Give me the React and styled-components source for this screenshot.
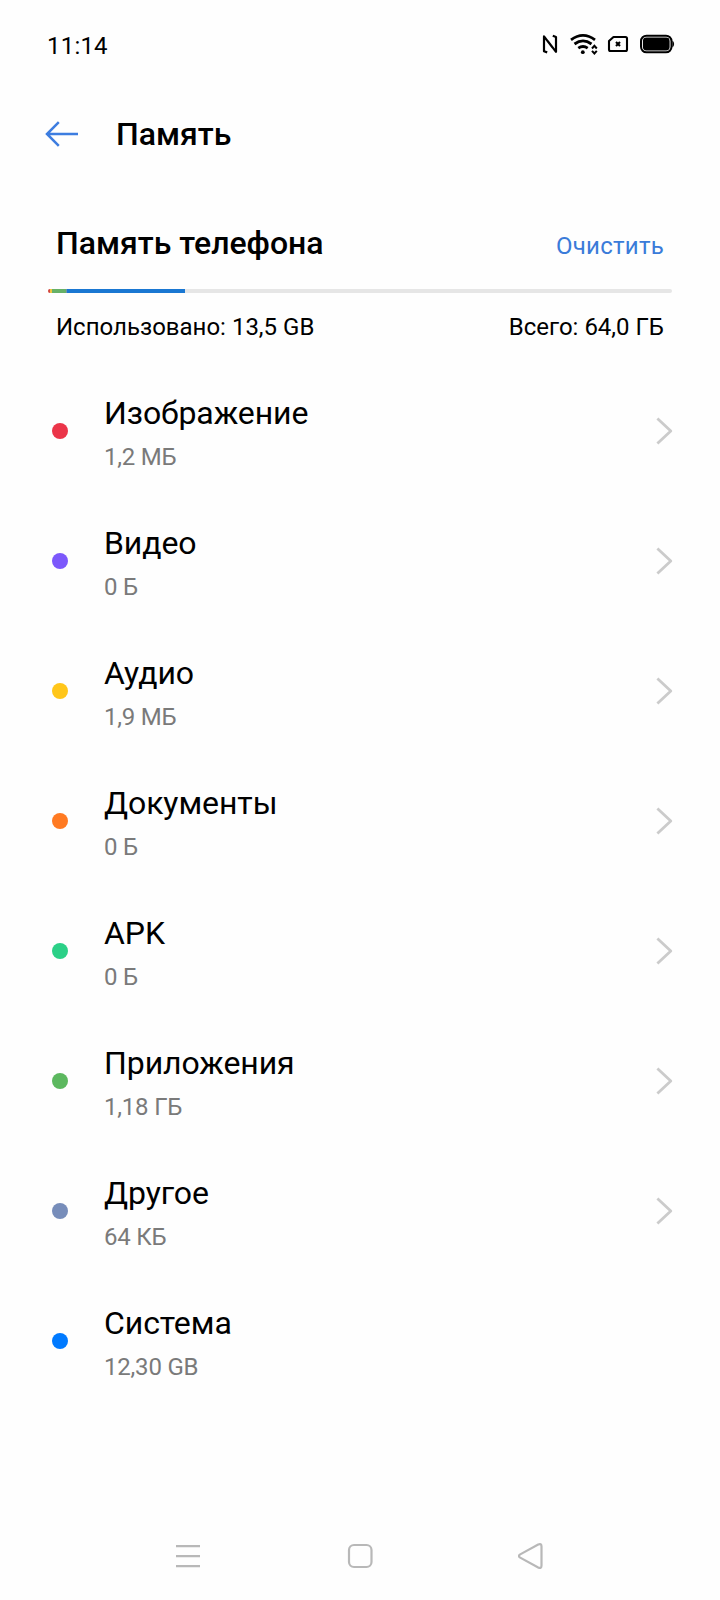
import React from "react";
import styled, { createGlobalStyle } from "styled-components";

const GlobalStyle = createGlobalStyle`
  * { box-sizing: border-box; }
  body { margin: 0; background: #fefefe; }
`;

const Screen = styled.main`
  width: 720px;
  height: 1600px;
  display: flex;
  flex-direction: column;
  overflow: hidden;
  background: #fefefe;
  color: #000;
  font-family: Roboto, "Noto Sans", sans-serif;
`;

const StatusBar = styled.div`
  height: 90px;
  padding: 32px 45px 0 47px;
  display: flex;
  justify-content: space-between;
  align-items: flex-start;
`;

const Clock = styled.span`
  font-size: 24px;
  line-height: 28px;
  letter-spacing: 0.2px;
`;

const StatusIcons = styled.svg`
  width: 134px;
  height: 24px;
  display: block;
`;

const Header = styled.header`
  height: 89px;
  padding: 25px 46px 0 45px;
  display: flex;
  align-items: flex-start;
`;

const BackButton = styled.button`
  width: 71px;
  height: 38px;
  padding: 0;
  border: 0;
  background: none;
  text-align: left;
  svg { display: block; }
`;

const PageTitle = styled.h1`
  margin: 0;
  font-size: 32px;
  line-height: 38px;
  font-weight: 500;
`;

const Summary = styled.section`
  height: 187px;
  padding: 45px 48px 0;
`;

const SummaryLine = styled.div`
  padding: 0 8px;
  display: flex;
  justify-content: space-between;
  align-items: baseline;
  font-size: 24px;
  line-height: 28px;
`;

const SummaryTitle = styled.h2`
  margin: 0;
  font-size: 32px;
  line-height: 38px;
  font-weight: 500;
`;

const ClearButton = styled.button`
  padding: 0;
  border: 0;
  background: none;
  color: #3a7bd9;
  font: inherit;
  letter-spacing: 0.25px;
`;

const UsageBar = styled.div`
  height: 4px;
  margin: 27px 0 20px;
  border-radius: 2px;
  overflow: hidden;
  display: flex;
  background: #e6e6e6;
`;

const UsagePart = styled.span`
  width: ${(p) => p.$size}px;
  background: ${(p) => p.$color};
`;

const List = styled.ul`
  margin: 0;
  padding: 0;
  list-style: none;
`;

const Row = styled.li`
  height: 130px;
  padding: 0 47px 0 52px;
  display: flex;
  align-items: center;
`;

const Dot = styled.span`
  width: 16px;
  height: 16px;
  margin-right: 36px;
  border-radius: 50%;
  background: ${(p) => p.$color};
`;

const RowText = styled.div`
  height: 130px;
  padding-top: 28px;
  flex: 1;
  display: flex;
  flex-direction: column;
  gap: 11px;
`;

const RowTitle = styled.span`
  font-size: 32px;
  line-height: 38px;
  letter-spacing: -0.08px;
`;

const RowValue = styled.span`
  font-size: 24px;
  line-height: 28px;
  letter-spacing: -0.2px;
  color: #7a7a7a;
`;

const NavBar = styled.nav`
  margin-top: auto;
  height: 88px;
  padding: 0 174px;
  display: flex;
  justify-content: space-between;
  align-items: center;
  svg { display: block; }
`;

const usage = [
  { size: 2, color: "#d5463b" },
  { size: 2, color: "#f0c541" },
  { size: 14, color: "#67b168" },
  { size: 1, color: "#6c94a8" },
  { size: 118, color: "#1a77d2" },
];

const categories = [
  { title: "Изображение", value: "1,2 МБ", color: "#eb3549", link: true },
  { title: "Видео", value: "0 Б", color: "#7c58fb", link: true },
  { title: "Аудио", value: "1,9 МБ", color: "#ffc61a", link: true },
  { title: "Документы", value: "0 Б", color: "#ff7a22", link: true },
  { title: "APK", value: "0 Б", color: "#2bd087", link: true },
  { title: "Приложения", value: "1,18 ГБ", color: "#5cb85f", link: true },
  { title: "Другое", value: "64 КБ", color: "#778dba", link: true },
  { title: "Система", value: "12,30 GB", color: "#007aff", link: false },
];

function Chevron() {
  return (
    <svg width="17" height="28" viewBox="0 0 17 28" fill="none" stroke="#cbcbcb" strokeWidth="2.8">
      <path d="M1.4 1.5 14.8 14 1.4 26.5" strokeLinejoin="round" />
    </svg>
  );
}

function Status() {
  return (
    <StatusIcons viewBox="541 32 134 24" fill="none" stroke="#000">
      <path
        d="M547.2 52.4 544 51.2V36.4L552.6 47.6M552.8 35.8 556 37V51.8L547.8 41.2"
        strokeWidth="2.2"
        strokeLinejoin="round"
      />
      <g strokeWidth="2.8">
        <path d="M571 39.8Q583 31 595 39.8" />
        <path d="M574.5 44Q583 37.8 591.5 44" />
        <path d="M578.3 48.2Q583 44.8 587.7 48.2" />
      </g>
      <circle cx="582.8" cy="52.2" r="1.9" fill="#000" stroke="none" />
      <path d="m592 48.5 2.4-2.7 2.4 2.7M592 50.8l2.4 2.7 2.4-2.7" strokeWidth="2" />
      <path d="M613.5 37H625.5Q627 37 627 38.5V49.5Q627 51 625.5 51H610.5Q609 51 609 49.5V41Z" strokeWidth="2.1" strokeLinejoin="round" />
      <path d="m616 42 4 4M620 42l-4 4" strokeWidth="2.1" />
      <rect x="641" y="35.7" width="30.5" height="16.6" rx="5.5" strokeWidth="2" />
      <rect x="642.9" y="37.6" width="26.7" height="12.8" rx="3.4" fill="#000" stroke="none" />
      <path d="M672.4 40.5q1.7 1 1.7 3.5t-1.7 3.5z" fill="#000" stroke="none" />
    </StatusIcons>
  );
}

export default function App() {
  return (
    <Screen>
      <GlobalStyle />
      <StatusBar>
        <Clock>11:14</Clock>
        <Status />
      </StatusBar>
      <Header>
        <BackButton aria-label="Назад">
          <svg width="34" height="38" viewBox="45 115 34 38" fill="none" stroke="#3d7de0" strokeWidth="2.5">
            <path d="M78 134H47.2M58.8 122.2 47 134l11.8 11.8" />
          </svg>
        </BackButton>
        <PageTitle>Память</PageTitle>
      </Header>
      <Summary>
        <SummaryLine>
          <SummaryTitle>Память телефона</SummaryTitle>
          <ClearButton>Очистить</ClearButton>
        </SummaryLine>
        <UsageBar>
          {usage.map((u) => (
            <UsagePart key={u.color} $size={u.size} $color={u.color} />
          ))}
        </UsageBar>
        <SummaryLine>
          <span>Использовано: 13,5 GB</span>
          <span>Всего: 64,0 ГБ</span>
        </SummaryLine>
      </Summary>
      <List>
        {categories.map((c) => (
          <Row key={c.title}>
            <Dot $color={c.color} />
            <RowText>
              <RowTitle>{c.title}</RowTitle>
              <RowValue>{c.value}</RowValue>
            </RowText>
            {c.link && <Chevron />}
          </Row>
        ))}
      </List>
      <NavBar>
        <svg width="28" height="28" viewBox="174 1542 28 28" stroke="#b8b8b8" strokeWidth="2.2">
          <path d="M176 1546.2H200M176 1556.2H200M176 1566.2H200" />
        </svg>
        <svg width="28" height="28" viewBox="346 1542 28 28" fill="none" stroke="#b8b8b8" strokeWidth="2.2">
          <rect x="349" y="1545" width="22.5" height="22" rx="5" />
        </svg>
        <svg width="28" height="28" viewBox="518 1542 28 28" fill="none" stroke="#b8b8b8" strokeWidth="2.2">
          <path d="M520.2 1554.4 538.2 1544.5Q541.5 1543 541.5 1546.5V1565.5Q541.5 1569 538.2 1567.5L520.2 1557.6Q517.6 1556 520.2 1554.4Z" />
        </svg>
      </NavBar>
    </Screen>
  );
}
